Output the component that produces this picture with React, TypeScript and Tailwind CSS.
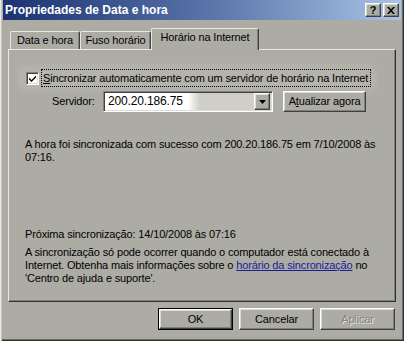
import { useState } from "react";

const raised =
  "border border-t-white border-l-white border-r-[#404040] border-b-[#404040] shadow-[inset_-1px_-1px_#808080,inset_1px_1px_#dcdbd4]";
const sunken =
  "border border-t-[#808080] border-l-[#808080] border-r-white border-b-white shadow-[inset_1px_1px_#404040,inset_-1px_-1px_#dcdbd4]";

const Tab = ({ label, width, active }: { label: string; width: string; active?: boolean }) => (
  <div
    className={`${width} ${
      active
        ? "relative z-10 h-[22px] -mb-px bg-[#adaca4] pt-[2px]"
        : "h-[18px] pt-[2px]"
    } flex justify-center rounded-t-[2px] border-l border-t border-l-[#e8e8e0] border-t-[#e8e8e0] border-r border-r-[#404040] shadow-[inset_-1px_0_#808080]`}
  >
    {label}
  </div>
);

const Button = ({ label, disabled }: { label: string; disabled?: boolean }) => (
  <button className={`${raised} w-[75px] h-[22px] flex items-center justify-center bg-[#adaca4] ${disabled ? "text-[#84837c] [text-shadow:1px_1px_#e4e3dc]" : ""}`}>
    {label}
  </button>
);

const App = () => {
  const [sync, setSync] = useState(true);
  return (
    <div className="w-[404px] h-[341px] bg-[#adaca4] text-black text-[11px] leading-[13px] tracking-[-0.15px] font-['Liberation_Sans',Arial,sans-serif] flex flex-col overflow-hidden shadow-[inset_1px_0_#e8e8e0,inset_2px_0_#c8c7c0,inset_-1px_-1px_#303030,inset_-2px_-2px_#6c6b66]">
      {/* title bar */}
      <div className="mx-[3px] h-[20px] shrink-0 bg-linear-to-r from-[#1c3272] via-[#5672a6] to-[#a8c4e6] flex items-center justify-between pl-[2px] pr-[2px]">
        <span className="text-white font-bold text-[12px] tracking-normal">Propriedades de Data e hora</span>
        <div className="flex gap-[2px]">
          <div className={`${raised} w-[16px] h-[14px] bg-[#adaca4] flex items-center justify-center font-bold text-[11px] leading-none`}>?</div>
          <div className={`${raised} w-[16px] h-[14px] bg-[#adaca4] flex items-center justify-center`}>
            <svg width="8" height="7" viewBox="0 0 8 7">
              <path d="M0 0h2l2 2.2L6 0h2L5 3.5 8 7H6L4 4.8 2 7H0l3-3.5z" fill="#000" />
            </svg>
          </div>
        </div>
      </div>

      {/* tabs */}
      <div className="ml-[10px] mt-[8px] h-[21px] flex items-end shrink-0">
        <Tab label="Data e hora" width="w-[70px]" />
        <Tab label="Fuso horário" width="w-[71px]" />
        <Tab label="Horário na Internet" width="w-[108px]" active />
      </div>

      {/* panel */}
      <div className="ml-[8px] w-[388px] h-[253px] shrink-0 border-l border-t border-l-[#e8e8e0] border-t-[#e8e8e0] border-r border-b border-r-[#303030] border-b-[#303030] shadow-[inset_-1px_-1px_#808080] pl-[16px] flex flex-col">
        <div className="mt-[19px] h-[18px] flex items-center -ml-[4px] w-[352px] rounded-[3px] bg-[#b4b3ac] shadow-[0_0_5px_3px_#b6b5ae]">
          <button
            onClick={() => setSync(!sync)}
            className={`${sunken} ml-[5px] w-[13px] h-[13px] bg-white flex items-center justify-center`}
          >
            {sync && (
              <svg width="7" height="7" viewBox="0 0 7 7">
                <path d="M0 2.5l2.5 2.5L7 0.5v2L2.5 7 0 4.5z" fill="#000" />
              </svg>
            )}
          </button>
          <div className="ml-[2px] w-[330px] h-[18px] border border-dotted border-black overflow-hidden whitespace-nowrap flex items-center pl-[1px]">
            <span>
              <u>S</u>incronizar automaticamente com um servidor de horário na Internet
            </span>
          </div>
        </div>

        <div className="mt-[4px] h-[21px] ml-[27px] flex items-center">
          <span className="w-[51px]">Servidor:</span>
          <div className={`${sunken} w-[170px] h-[21px] flex items-center bg-linear-to-r from-white from-50% to-[#cfcec8] to-57% pl-[4px] pr-[2px]`}>
            <span className="flex-1 text-[12px]">200.20.186.75</span>
            <div className={`${raised} w-[16px] h-[17px] bg-[#adaca4] flex items-center justify-center`}>
              <svg width="7" height="4" viewBox="0 0 7 4">
                <path d="M0 0h7L3.5 4z" fill="#000" />
              </svg>
            </div>
          </div>
          <button className={`${raised} ml-[10px] w-[83px] h-[21px] bg-[#adaca4]`}>
            A<u>t</u>ualizar agora
          </button>
        </div>

        <p className="mt-[26px] whitespace-nowrap">
          A hora foi sincronizada com sucesso com 200.20.186.75 em 7/10/2008 às
          <br />
          07:16.
        </p>

        <p className="mt-[64px] whitespace-nowrap">Próxima sincronização: 14/10/2008 às 07:16</p>

        <p className="mt-[5px] whitespace-nowrap">
          A sincronização só pode ocorrer quando o computador está conectado à
          <br />
          Internet. Obtenha mais informações sobre o{" "}
          <a className="text-[#1a1a9c] underline">horário da sincronização</a> no
          <br />
          'Centro de ajuda e suporte'.
        </p>
      </div>

      {/* buttons */}
      <div className="mt-[6px] ml-[8px] w-[388px] flex justify-end gap-[6px] pr-[1px]">
        <div className="border border-black">
          <div className={`${raised} w-[73px] h-[20px] flex items-center justify-center bg-[#adaca4]`}>OK</div>
        </div>
        <Button label="Cancelar" />
        <Button label="Aplicar" disabled />
      </div>
    </div>
  );
};

export default App;
